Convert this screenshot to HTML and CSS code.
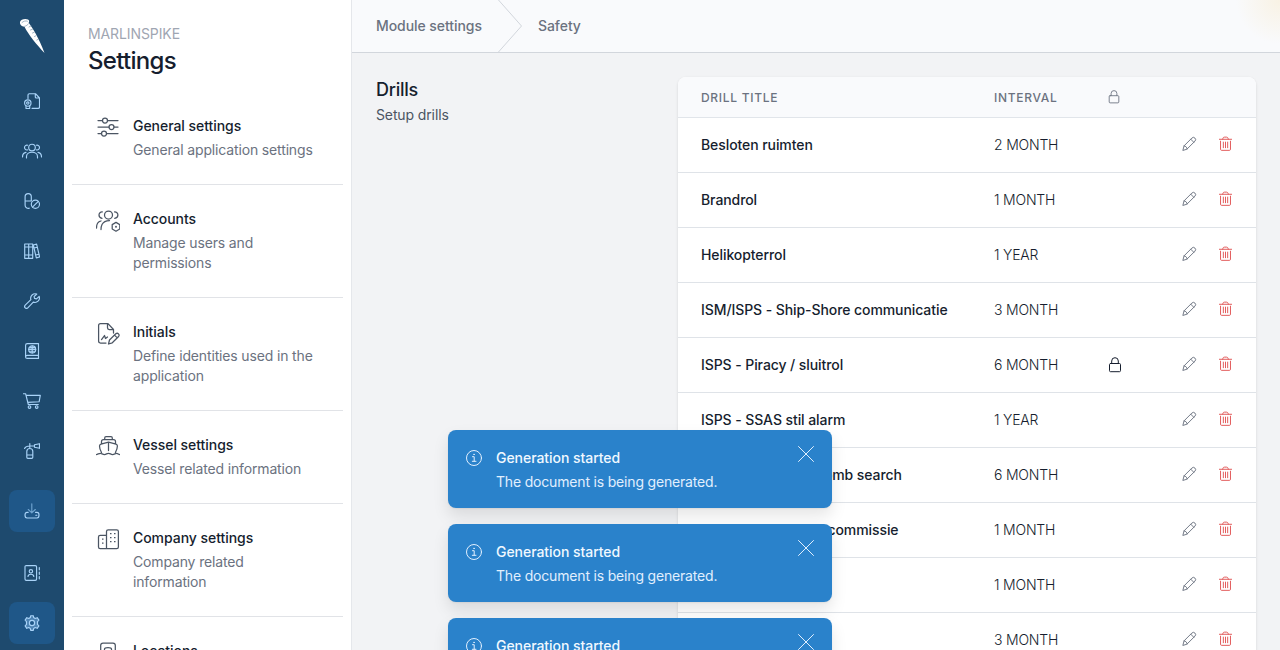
FILE: index.html
```
<!DOCTYPE html>
<html lang="en">
<head>
  <meta charset="UTF-8" />
  <meta name="viewport" content="width=device-width, initial-scale=1.0" />
  <title>Marlinspike - Settings</title>
  <link rel="stylesheet" href="styles.css">
</head>
<body>
  <!-- shared icons -->
  <svg class="sprite" width="0" height="0">
    <symbol id="pencil" viewBox="0 0 16 16">
      <path d="M1 15l1.200-4.500L10.500 2.200a2.200 2.200 0 0 1 3.300 3.300L5.500 13.800zM9.300 3.400l3.300 3.300M2.200 10.500c1.800.2 3.100 1.500 3.300 3.300" />
    </symbol>
    <symbol id="trash" viewBox="0 0 16 16">
      <path d="M1.500 3.500h13M5 3.300C5.300 1.600 6 1.200 7 1.200h2c1 0 1.700.4 2 2.100M2.700 5.500v8.600c0 .7.4 1.200 1 1.200h8.600c.6 0 1-.5 1-1.200V5.500M5.700 6.500v6M8 6.500v6M10.300 6.500v6" />
    </symbol>
    <symbol id="lock" viewBox="0 0 16 16">
      <path d="M3.500 6.500h9c.6 0 1 .4 1 1v6.200c0 .6-.4 1-1 1h-9c-.6 0-1-.4-1-1V7.500c0-.6.4-1 1-1zM4.700 6.300V4a3.300 3.300 0 0 1 6.600 0v2.300" />
    </symbol>
    <symbol id="info" viewBox="0 0 16 16">
      <circle cx="8" cy="8" r="7.500" />
      <path d="M6.500 6.700h1.700v4.500M6.300 11.300h3.700M7.600 4.400h1" />
    </symbol>
    <symbol id="close" viewBox="0 0 16 16">
      <path d="M.5.5l15 15M15.500.5l-15 15" />
    </symbol>
  </svg>

  <div class="app">
    <nav class="rail">
      <svg class="logo" viewBox="0 0 26 36">
        <path class="spike" d="M1 4C1.500 1.500 6 .2 9 1.500c1.500.7 1.400 2 .7 3.300C13 9 20 20 25.500 35 18 27 9 16 5.500 8.700 2.500 8.500.7 6.500 1 4z" />
        <path class="shade" d="M3 4.500c1.500-1.400 3.700-2 5.400-1.300M5.700 8.300c1.500-.3 3-1.300 3.700-2.500M10 9l1.800-1M11.500 12l2-.8M13.500 15l1.800-.8M15.500 18.500l1.500-.8M17.800 22l1.200-.6" />
      </svg>
      <div class="rail-group">
        <a class="rail-item"><svg viewBox="0 0 16 16"><path d="M4 5.500V2c0-.8.5-1.300 1.300-1.300h6.200L15.500 5v9c0 .8-.5 1.300-1.300 1.300H8M11.300 1v3c0 .7.4 1 1 1h3" /><circle cx="3.800" cy="10" r="3.200" /><circle cx="3.800" cy="10" r="1.200" /><path d="M2 12.800v2.700h3.700v-2.700" /></svg></a>
        <a class="rail-item"><svg class="wide" viewBox="0 0 20 16"><circle cx="10" cy="4.500" r="3.300" /><path d="M4.500 15v-1.500c0-2.500 2.300-4.300 5.500-4.300s5.500 1.800 5.500 4.300V15M5.500 6.900C3.800 7.300 2.500 6 2.500 4.500S4 1.700 5.700 2.200M14.500 6.900c1.700.4 3-.9 3-2.400s-1.500-2.800-3.200-2.300M.5 14c0-2.500 1-4.200 3.500-4.600M19.500 14c0-2.500-1-4.200-3.500-4.600" /></svg></a>
        <a class="rail-item"><svg viewBox="0 0 16 16"><path d="M7.300 8V3.700a3.100 3.100 0 0 0-6.200 0v8.500c0 2.200 2.200 3.600 4.200 3M1.100 8h5.700" /><circle cx="11.400" cy="11.200" r="4.100" /><path d="M8.500 14.100l5.800-5.800" /></svg></a>
        <a class="rail-item"><svg viewBox="0 0 16 16"><path d="M.7 1h4v14.300h-4zM4.700 1h4v14.300h-4zM.7 4h8M.7 12h8M9.300 2l3.300-.9 3 12.900-3.300.9zM10 5l3.400-.8M11.700 12l3.400-.8" /></svg></a>
        <a class="rail-item"><svg viewBox="0 0 16 16"><path d="M12.800 1.100a4.500 4.500 0 0 0-5.900 5.600L1.200 12.200a1.700 1.700 0 0 0 2.600 2.600l5.500-5.700a4.500 4.500 0 0 0 5.900-5.700l-2.700 2.500-2-.5-.4-1.900z" /></svg></a>
        <a class="rail-item"><svg viewBox="0 0 16 16"><path d="M3.300.6h11.200v11.800H3.300c-2.300 0-2.300 3 0 3h11.200v-3M1.600 14V2.300C1.600 1.300 2.300.6 3.300.6" /><circle cx="8.200" cy="6.400" r="3.500" /><path d="M4.700 6.400h7M5.300 4.600h5.800M5.300 8.200h5.800M8.200 3v7" /></svg></a>
        <a class="rail-item"><svg class="cart" viewBox="0 0 18 16"><path d="M.3.700h2.300l2.700 10.800h10M3 2.300h14.300l-1.200 6.500-11.400.6" /><circle cx="6.500" cy="14" r="1.300" /><circle cx="13.700" cy="14" r="1.300" /></svg></a>
        <a class="rail-item"><svg viewBox="0 0 16 16"><path d="M2.800 8.500c0-4 6-4 6 0v5.800c0 .7-.3 1-1 1h-4c-.7 0-1-.3-1-1zM2.800 12h6M5.800 5.300V.6M.5 5.500C1.500 3.500 3 3 5.800 3h4.700M10.500 1.700l5-1v4.600l-5-1z" /></svg></a>
      </div>
      <a class="rail-item active download"><svg viewBox="0 0 16 16"><path class="dim" d="M7.800.7v9M4.300 6.500l3.500 3.400 3.500-3.400" /><path d="M4.200 9.300H3c-1.300 0-2 1-2 2.700s.7 3 2 3h10c1.300 0 2-1.300 2-3s-.7-2.700-2-2.700h-1.500M11.800 12.200h1" /></svg></a>
      <div class="rail-group">
        <a class="rail-item"><svg viewBox="0 0 16 16"><path d="M2.300.6h9c.8 0 1.300.5 1.300 1.300v12.200c0 .8-.5 1.300-1.300 1.300h-9c-.8 0-1.300-.5-1.300-1.300V1.900C1 1.100 1.500.6 2.300.6zM15.300 2.500v2.300M15.300 7v2.300M15.300 11.500v2.300M4 11.500c.2-3 5.600-3 5.800 0" /><circle cx="6.900" cy="6.300" r="1.700" /></svg></a>
        <a class="rail-item active"><svg class="gear" viewBox="0 0 16 16"><path d="M6.300 2.600L6.700.7h2.600l.4 1.900 1.500.9 2-.8 1.700 2.400-1.400 1.500v2.800l1.400 1.500-1.700 2.400-2-.8-1.500.9-.4 1.900H6.700l-.4-1.900-1.500-.9-2 .8-1.700-2.400 1.400-1.500V6.600L1.100 5.100l1.700-2.400 2 .8z" /><circle cx="8" cy="8" r="2.600" /></svg></a>
      </div>
    </nav>

    <aside class="sidebar">
      <div class="sidebar-head">
        <div class="app-name">MARLINSPIKE</div>
        <h1>Settings</h1>
      </div>
      <div class="menu">
        <a class="menu-item">
          <svg viewBox="0 0 24 24"><path d="M2 4.500h4.500M11.500 4.500H22M2 11h11M18 11h4M2 17.500h3.500M10.500 17.500H22" /><circle cx="9" cy="4.500" r="2.500" /><circle cx="15.500" cy="11" r="2.500" /><circle cx="8" cy="17.500" r="2.500" /></svg>
          <div><h2>General settings</h2><p>General application settings</p></div>
        </a>
        <a class="menu-item">
          <svg viewBox="0 0 24 24"><circle cx="12.500" cy="6" r="4" /><path d="M6 15.500c1.500-3 4-4 7.500-4M5 20.500c0-2 .3-3.500 1-5M6 9.400C4.300 9 3 7.700 3 6s1.500-3.300 3.300-3.100M18.700 9.300c1.700-.2 3.200-1.500 3.200-3.300s-1.500-3.200-3.300-3.100M.5 19c0-4 1-6.400 4.500-7M20 13.400l3.800 2.200v4.400L20 22.200l-3.800-2.200v-4.400z" /><circle cx="20" cy="17.800" r=".4" /></svg>
          <div><h2>Accounts</h2><p>Manage users and permissions</p></div>
        </a>
        <a class="menu-item">
          <svg viewBox="0 0 24 24"><path d="M10 21H4.500c-1 0-1.900-.8-1.900-1.900V3.500c0-1 .9-1.900 1.900-1.900h7.500L17.500 7.500V11M11.500 1.800v4c0 1 .7 1.700 1.700 1.700h4.300M5.500 17.500l3-4 1 3 2-1.500M13.500 18l6.300-6.200c2-1.500 4.200.7 2.800 2.700l-6.300 6.300-3.800 1.200zM18.500 13.100l2.800 2.800" /></svg>
          <div><h2>Initials</h2><p>Define identities used in the application</p></div>
        </a>
        <a class="menu-item">
          <svg viewBox="0 0 24 24"><path d="M5.500 17.500C4 15 3.500 12.500 3.500 11c0-1 .5-1.500 1.500-1.800l7.500-2L20 9.200c1 .3 1.400.8 1.400 1.800 0 1.500-.6 4-2 6.500M5.500 9V6.500c0-1.500.7-2 2-2h10c1.300 0 2 .5 2 2V9M8.700 4.500V3c0-1 .5-1.500 1.300-1.500h5c.8 0 1.300.5 1.300 1.500v1.500M12.500 7.500v8M.3 19.500c1.400 0 2.500-1.200 4.200-1.200 1.500 0 2 1.200 4 1.200s2-1.200 4-1.200 2 1.200 4 1.200 2.500-1.200 4-1.200c1.400 0 2 1.200 3.300 1.200" /></svg>
          <div><h2>Vessel settings</h2><p>Vessel related information</p></div>
        </a>
        <a class="menu-item">
          <svg viewBox="0 0 24 24"><path d="M10.500 19.500v-16c0-1 .7-1.700 1.700-1.700h8.500c1 0 1.700.7 1.700 1.700V19c0 1-.7 1.700-1.700 1.700H4.200c-1 0-1.700-.7-1.700-1.700V9c0-1 .7-1.700 1.700-1.700h6.300M10.500 18.500v2" /><path class="dots" d="M14 5.500h1.500M18 5.500h1.500M14 9.500h1.500M18 9.500h1.500M14 13.500h1.500M18 13.500h1.500M6 11h1.500M6 15h1.500" /></svg>
          <div><h2>Company settings</h2><p>Company related information</p></div>
        </a>
        <a class="menu-item">
          <svg viewBox="0 0 24 24"><path d="M7 2h10c1.500 0 2.300.8 2.300 2.300V20H4.700V4.300C4.700 2.800 5.500 2 7 2zM8.500 8c0-2 7-2 7 0v3h-7z" /></svg>
          <div><h2>Locations</h2><p>Manage locations</p></div>
        </a>
      </div>
    </aside>

    <main class="main">
      <header class="breadcrumb">
        <a>Module settings</a>
        <svg viewBox="0 0 24 52"><path d="M.5 0L23.500 26 .5 52" /></svg>
        <a>Safety</a>
      </header>

      <section class="content">
        <div class="intro">
          <h3>Drills</h3>
          <p>Setup drills</p>
        </div>
        <div class="card">
          <table>
            <colgroup>
              <col class="col-title">
              <col class="col-interval">
              <col class="col-lock">
              <col class="col-actions">
            </colgroup>
            <thead>
              <tr><th>DRILL TITLE</th><th>INTERVAL</th><th><svg class="icon"><use href="#lock" /></svg></th><th></th></tr>
            </thead>
            <tbody id="drills"></tbody>
          </table>
        </div>
      </section>
    </main>
  </div>

  <div class="toasts">
    <div class="toast">
      <svg class="icon"><use href="#info" /></svg>
      <div class="toast-text"><strong>Generation started</strong><p>The document is being generated.</p></div>
      <svg class="icon close"><use href="#close" /></svg>
    </div>
    <div class="toast">
      <svg class="icon"><use href="#info" /></svg>
      <div class="toast-text"><strong>Generation started</strong><p>The document is being generated.</p></div>
      <svg class="icon close"><use href="#close" /></svg>
    </div>
    <div class="toast">
      <svg class="icon"><use href="#info" /></svg>
      <div class="toast-text"><strong>Generation started</strong><p>The document is being generated.</p></div>
      <svg class="icon close"><use href="#close" /></svg>
    </div>
  </div>

  <script src="script.js"></script>
</body>
</html>
```
FILE: styles.css
```
* {
  box-sizing: border-box;
}

body {
  margin: 0;
  height: 100vh;
  overflow: hidden;
  font-family: Inter, "Liberation Sans", sans-serif;
  font-size: 14px;
  line-height: 20px;
  color: #161e2e;
  background: #f2f3f5;
}

h1, h2, h3, p {
  margin: 0;
  font-weight: 500;
}

svg {
  display: block;
  flex-shrink: 0;
  fill: none;
  stroke: currentColor;
  stroke-linecap: round;
  stroke-linejoin: round;
}

.sprite {
  position: absolute;
}

.icon {
  width: 16px;
  height: 16px;
}

.app {
  display: flex;
  height: 100vh;
  overflow: hidden;
}

/* left rail */
.rail {
  width: 64px;
  flex-shrink: 0;
  display: flex;
  flex-direction: column;
  align-items: center;
  background: #1e4a6e;
  color: #a9d3f8;
}

.logo {
  width: 26px;
  height: 36px;
  margin: 18px 0 26px;
}

.spike {
  fill: #fff;
  stroke: none;
}

.shade {
  stroke: #8ba2b5;
  stroke-width: 0.8;
}

.rail-group {
  display: flex;
  flex-direction: column;
  gap: 8px;
}

.rail-item {
  width: 46px;
  height: 42px;
  display: flex;
  align-items: center;
  justify-content: center;
  border-radius: 8px;
}

.rail-item svg {
  width: 16px;
  height: 16px;
  stroke-width: 1.15;
}

.rail-item .wide {
  width: 20px;
}

.rail-item .cart {
  width: 18px;
}

.rail-item.active {
  background: #1f5788;
}

.rail-item.download {
  margin: 18px 0 20px;
}

.dim {
  stroke: #6fa3cf;
}

.rail-item .gear {
  fill: #4d83b3;
}

.gear circle {
  fill: #1f5788;
}

/* settings menu */
.sidebar {
  width: 288px;
  flex-shrink: 0;
  background: #fff;
  border-right: 1px solid #e5e7eb;
}

.sidebar-head {
  height: 92px;
  padding: 24px 24px 0;
}

.app-name {
  color: #9fa6b2;
  letter-spacing: -0.1px;
}

h1 {
  font-size: 24px;
  line-height: 34px;
  letter-spacing: -0.7px;
}

.menu {
  padding: 0 8px;
}

.menu-item {
  display: flex;
  gap: 13px;
  padding: 24px;
  border-bottom: 1px solid #e1e3e7;
}

.menu-item svg {
  width: 24px;
  height: 24px;
  stroke-width: 1.25;
  color: #4b5563;
}

.menu-item h2 {
  font-size: 14px;
  line-height: 20px;
  letter-spacing: -0.05px;
  margin-bottom: 4px;
}

.menu-item p {
  font-weight: 400;
  letter-spacing: -0.15px;
  color: #6b7280;
}

.dots {
  stroke-linecap: butt;
}

/* page */
.main {
  flex: 1;
  min-width: 0;
}

.breadcrumb {
  height: 53px;
  display: flex;
  align-items: center;
  gap: 16px;
  padding-left: 24px;
  border-bottom: 1px solid #d2d6dc;
  background: radial-gradient(circle at 100% 0, #f8f2e4 0, #f9fafc 44px);
  font-weight: 500;
  letter-spacing: -0.06px;
  color: #6b7280;
}

.breadcrumb svg {
  width: 24px;
  height: 52px;
  color: #d2d6dc;
}

.content {
  display: flex;
  justify-content: space-between;
  padding: 24px;
}

.intro h3 {
  font-size: 18px;
  line-height: 26px;
  letter-spacing: -0.25px;
}

.intro p {
  margin-top: 2px;
  font-weight: 400;
  letter-spacing: -0.12px;
  color: #4b5563;
}

.card {
  width: 578px;
  border-radius: 8px;
  overflow: hidden;
  background: #fff;
  box-shadow: 0 1px 3px rgba(0, 0, 0, 0.12);
}

table {
  width: 100%;
  table-layout: fixed;
  border-collapse: collapse;
}

.col-title {
  width: 293px;
}

.col-interval {
  width: 113px;
}

.col-lock {
  width: 65px;
}

th {
  height: 40px;
  padding: 2px 0 0 23px;
  border-bottom: 1px solid #e1e5ea;
  background: #f9fafc;
  text-align: left;
  font-size: 12px;
  font-weight: 500;
  letter-spacing: 0.7px;
  color: #6b7280;
}

th .icon {
  width: 14px;
  height: 14px;
  margin-top: -1px;
}

td {
  height: 55px;
  padding: 0 0 0 23px;
  border-bottom: 1px solid #dfe3e8;
  font-weight: 300;
  letter-spacing: -0.2px;
  white-space: nowrap;
}

td:first-child {
  font-weight: 500;
  letter-spacing: -0.08px;
}

.actions {
  display: flex;
  gap: 21px;
  align-items: center;
  padding-left: 10px;
  padding-bottom: 2px;
  color: #6b7280;
}

.actions .icon {
  width: 15px;
  height: 15px;
}

.actions .delete {
  color: #e05252;
}

/* notifications lie over the page */
.toasts {
  position: absolute;
  top: 430px;
  left: 448px;
  width: 384px;
  height: 220px;
  display: flex;
  flex-direction: column;
  gap: 16px;
}

.toast {
  flex-shrink: 0;
  height: 78px;
  display: flex;
  padding: 18px;
  border-radius: 8px;
  background: #2a82cb;
  color: #e1effe;
  box-shadow: 0 8px 16px rgba(0, 0, 0, 0.1), 0 1px 2px rgba(0, 0, 0, 0.06);
}

.toast .icon {
  margin-top: 2px;
}

.toast .close {
  margin-top: -2px;
}

.toast-text {
  flex: 1;
  padding-left: 14px;
  letter-spacing: -0.05px;
}

.toast strong {
  font-weight: 500;
  color: #f0f8ff;
}

.toast p {
  margin-top: 4px;
  font-weight: 400;
  letter-spacing: -0.18px;
}
```
FILE: script.js
```
const drills = [
  ["Besloten ruimten", "2 MONTH"],
  ["Brandrol", "1 MONTH"],
  ["Helikopterrol", "1 YEAR"],
  ["ISM/ISPS - Ship-Shore communicatie", "3 MONTH"],
  ["ISPS - Piracy / sluitrol", "6 MONTH", true],
  ["ISPS - SSAS stil alarm", "1 YEAR"],
  ["ISPS: Threat and Bomb search", "6 MONTH"],
  ["ISPS - Veiligheids- commissie", "1 MONTH"],
  ["Man overboord", "1 MONTH"],
  ["Milieurol", "3 MONTH"]
];

const icon = (name, cls = "") => `<svg class="icon ${cls}"><use href="#${name}" /></svg>`;

document.getElementById("drills").innerHTML = drills.map(([title, interval, locked]) => `
  <tr>
    <td>${title}</td>
    <td>${interval}</td>
    <td>${locked ? icon("lock") : ""}</td>
    <td><div class="actions">${icon("pencil")}${icon("trash", "delete")}</div></td>
  </tr>`).join("");
```
